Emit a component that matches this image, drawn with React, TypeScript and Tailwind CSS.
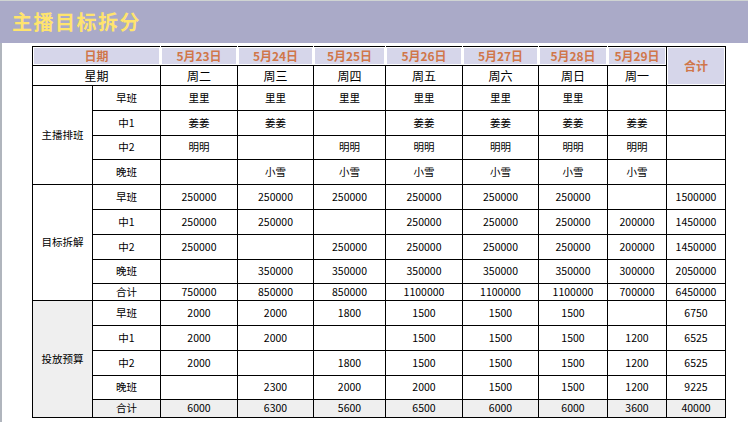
import React from "react";

const dates = ["5月23日", "5月24日", "5月25日", "5月26日", "5月27日", "5月28日", "5月29日"];
const weeks = ["周二", "周三", "周四", "周五", "周六", "周日", "周一"];

type Row = { label: string; cells: string[]; h: string; gray?: boolean };
type Group = { name: string; gray?: boolean; rows: Row[] };

const groups: Group[] = [
	{
		name: "主播排班",
		rows: [
			{ label: "早班", h: "h-[25px]", cells: ["里里", "里里", "里里", "里里", "里里", "里里", "", ""] },
			{ label: "中1", h: "h-[25px]", cells: ["姜姜", "姜姜", "", "姜姜", "姜姜", "姜姜", "姜姜", ""] },
			{ label: "中2", h: "h-[24px]", cells: ["明明", "", "明明", "明明", "明明", "明明", "明明", ""] },
			{ label: "晚班", h: "h-[25px]", cells: ["", "小雪", "小雪", "小雪", "小雪", "小雪", "小雪", ""] },
		],
	},
	{
		name: "目标拆解",
		rows: [
			{ label: "早班", h: "h-[25px]", cells: ["250000", "250000", "250000", "250000", "250000", "250000", "", "1500000"] },
			{ label: "中1", h: "h-[25px]", cells: ["250000", "250000", "", "250000", "250000", "250000", "200000", "1450000"] },
			{ label: "中2", h: "h-[25px]", cells: ["250000", "", "250000", "250000", "250000", "250000", "200000", "1450000"] },
			{ label: "晚班", h: "h-[24px]", cells: ["", "350000", "350000", "350000", "350000", "350000", "300000", "2050000"] },
			{ label: "合计", h: "h-[17px]", cells: ["750000", "850000", "850000", "1100000", "1100000", "1100000", "700000", "6450000"] },
		],
	},
	{
		name: "投放预算",
		gray: true,
		rows: [
			{ label: "早班", h: "h-[25px]", cells: ["2000", "2000", "1800", "1500", "1500", "1500", "", "6750"] },
			{ label: "中1", h: "h-[25px]", cells: ["2000", "2000", "", "1500", "1500", "1500", "1200", "6525"] },
			{ label: "中2", h: "h-[25px]", cells: ["2000", "", "1800", "1500", "1500", "1500", "1200", "6525"] },
			{ label: "晚班", h: "h-[24px]", cells: ["", "2300", "2000", "2000", "1500", "1500", "1200", "9225"] },
			{ label: "合计", h: "h-[18px]", gray: true, cells: ["6000", "6300", "5600", "6500", "6000", "6000", "3600", "40000"] },
		],
	},
];

// 日期行的单元格：上下黑线，左右白线
const headCell =
	"bg-[#d6d6ea] text-[#d0764a] font-bold text-[12px] shadow-[inset_0_0_0_1px_#fff] border-y border-y-black";

export default function App() {
	return (
		<div className="w-[748px] h-[422px] bg-white font-['Noto_Sans_CJK_SC',sans-serif] overflow-hidden">
			{/* 标题栏 */}
			<div className="h-[43px] border-t border-[#cfd4d2] bg-[#aaaac8] flex items-center pl-3">
				<h1 className="text-[20px] font-bold tracking-[1.5px] text-[#ffe46e] leading-none">
					主播目标拆分
				</h1>
			</div>

			<div className="h-[379px] border-l-2 border-[#b0b5bd] pt-[3px] pl-[30px]">
				<table className="table-fixed border-collapse text-black leading-none">
					<colgroup>
						<col className="w-[60px]" />
						<col className="w-[68px]" />
						<col className="w-[77px]" />
						<col className="w-[76px]" />
						<col className="w-[72px]" />
						<col className="w-[77px]" />
						<col className="w-[76px]" />
						<col className="w-[69px]" />
						<col className="w-[59px]" />
						<col className="w-[59px]" />
					</colgroup>
					<thead>
						<tr className="h-[19px]">
							<th colSpan={2} className={`${headCell} border-l border-l-black border-r border-r-white`}>
								日期
							</th>
							{dates.map((d, i) => (
								<th
									key={d}
									className={
										i === dates.length - 1
											? `${headCell} border-l border-l-white border-r border-r-black`
											: `${headCell} border-x border-x-white`
									}
								>
									{d}
								</th>
							))}
							<th
								rowSpan={2}
								className="bg-[#d6d6ea] text-[#d0764a] font-bold text-[12px] shadow-[inset_0_0_0_1px_#fff] border border-black"
							>
								合计
							</th>
						</tr>
						<tr className="h-[20px]">
							<th colSpan={2} className="border border-black font-normal text-[12px]">
								星期
							</th>
							{weeks.map((w) => (
								<th key={w} className="border border-black font-normal text-[12px]">
									{w}
								</th>
							))}
						</tr>
					</thead>
					<tbody className="text-[10.5px]">
						{groups.map((g) =>
							g.rows.map((r, ri) => (
								<tr key={g.name + r.label} className={`${r.h} ${r.gray ? "bg-[#efefef]" : ""}`}>
									{ri === 0 && (
										<td
											rowSpan={g.rows.length}
											className={`border border-black text-center ${g.gray ? "bg-[#efefef]" : "bg-white"}`}
										>
											{g.name}
										</td>
									)}
									<td className="border border-black text-center">{r.label}</td>
									{r.cells.map((c, ci) => (
										<td key={ci} className="border border-black text-center">
											{c}
										</td>
									))}
								</tr>
							)),
						)}
					</tbody>
				</table>
			</div>
		</div>
	);
}
